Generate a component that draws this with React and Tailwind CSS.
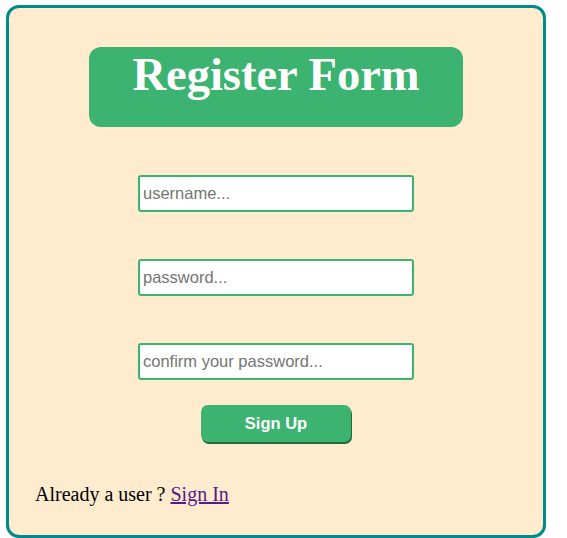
const inputCls =
  "w-[276px] h-[37px] bg-white border-2 border-[#3cb371] rounded-[3px] px-[3px] text-[16.5px] text-black placeholder:text-[#757575] outline-none font-['Liberation_Sans',Arial,sans-serif]";

export default function App() {
  return (
    <div className="w-[567px] h-[538px] bg-white pt-[5px] pl-[6px]">
      <div className="w-[540px] h-[533px] border-[3px] border-[#008b8b] rounded-[13px] bg-[#ffebcd] flex flex-col items-center">
        <div className="mt-[39px] w-[374px] h-[80px] rounded-[12px] bg-[#3cb371] flex justify-center">
          <h1 className="text-white font-bold text-[46.5px] leading-[55px] font-['Liberation_Serif','Times_New_Roman',serif]">
            Register Form
          </h1>
        </div>
        <input type="text" placeholder="username..." className={`mt-[48px] ${inputCls}`} />
        <input type="password" placeholder="password..." className={`mt-[47px] ${inputCls}`} />
        <input type="password" placeholder="confirm your password..." className={`mt-[47px] ${inputCls}`} />
        <button className="mt-[25px] w-[150px] h-[37px] rounded-[7px] bg-[#3cb371] text-white font-bold text-[16.5px] shadow-[1px_2px_0_#1e6b3d] font-['Liberation_Sans',Arial,sans-serif]">
          Sign Up
        </button>
        <p className="self-start ml-[26px] mt-[37px] text-[20px] text-black font-['Liberation_Serif','Times_New_Roman',serif]">
          Already a user ?{" "}
          <a href="#" className="text-[#551a8b] underline">
            Sign In
          </a>
        </p>
      </div>
    </div>
  );
}
